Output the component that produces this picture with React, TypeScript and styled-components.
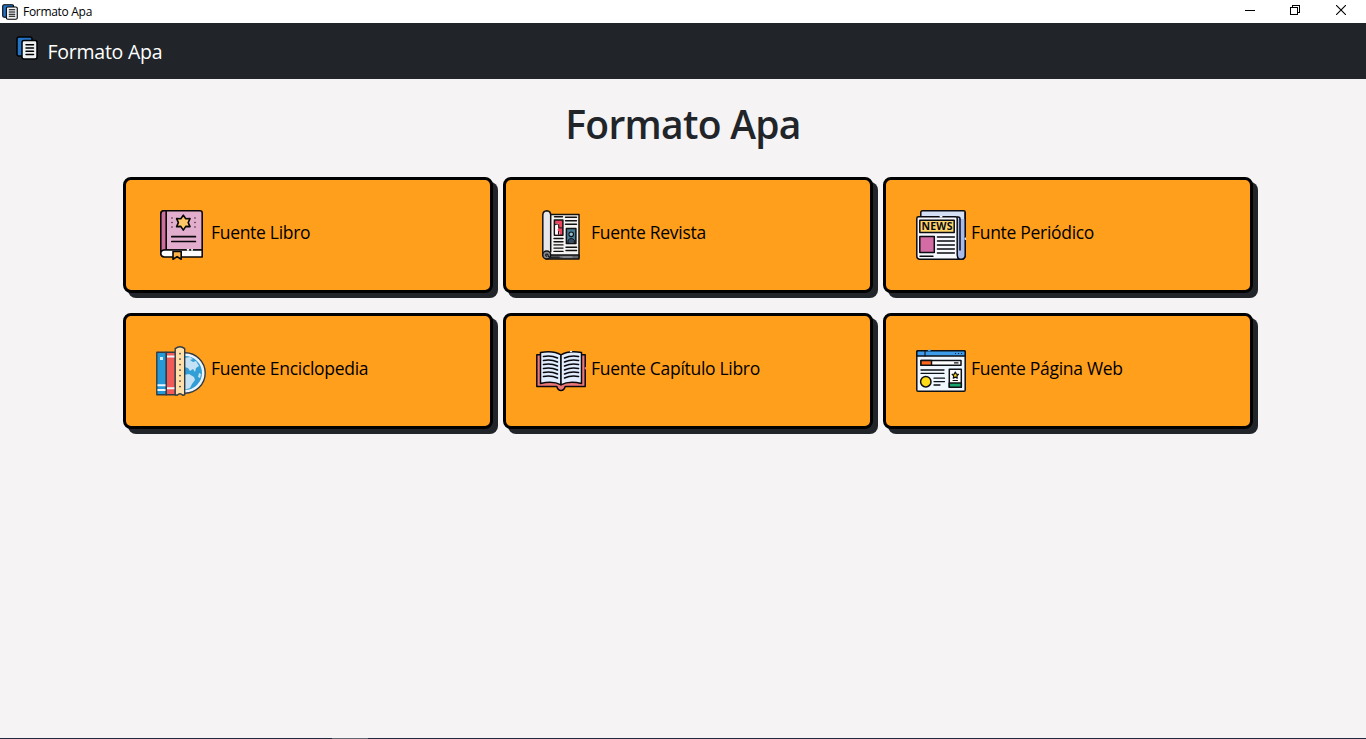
import React from "react";
import styled, { createGlobalStyle } from "styled-components";

const GlobalStyle = createGlobalStyle`
  *, *::before, *::after { box-sizing: border-box; }
  body {
    margin: 0;
    background: #f5f3f4;
    color: #212529;
    font-family: "Segoe UI", "Open Sans", "Noto Sans", sans-serif;
    overflow: hidden;
  }
`;

const Window = styled.div`
  display: flex;
  flex-direction: column;
  height: 739px;
`;

const TitleBar = styled.div`
  display: flex;
  align-items: center;
  height: 23px;
  padding-left: 2px;
  background: #fff;
  color: #000;
`;

const WindowTitle = styled.span`
  flex: 1;
  margin-left: 5px;
  font-size: 12px;
  line-height: 22px;
  letter-spacing: -0.3px;
`;

const WindowButton = styled.div`
  display: flex;
  align-items: center;
  justify-content: center;
  width: 46px;
  height: 20px;
  margin-bottom: 3px;

  &:last-child { margin-right: 2px; }
`;

const Navbar = styled.nav`
  display: flex;
  height: 56px;
  padding: 13px 16px;
  background: #212529;
`;

const Brand = styled.span`
  margin-left: 9.5px;
  color: #fff;
  font-size: 19.5px;
  line-height: 32px;
  letter-spacing: -0.25px;
`;

const Main = styled.main`
  flex: 1;
  display: flex;
  flex-direction: column;
  align-items: center;
`;

const Heading = styled.h1`
  margin: 21px 0 29px;
  font-size: 39px;
  font-weight: 550;
  line-height: 48px;
  letter-spacing: -0.7px;
`;

const CardGrid = styled.div`
  display: grid;
  grid-template-columns: repeat(3, 370px);
  column-gap: 10px;
  row-gap: 20px;
  margin-left: 10px;
`;

const Card = styled.div`
  display: flex;
  align-items: center;
  height: 116px;
  padding: 30px;
  border: 3px solid #000;
  border-radius: 8px;
  background: #ff9f1c;
  box-shadow: 5px 5px 0 #212529;
  color: #000;
`;

const CardLabel = styled.span`
  margin: -6px 0 0 5px;
  font-size: 17.5px;
  line-height: 27px;
  letter-spacing: -0.3px;
  white-space: nowrap;
`;

const Taskbar = styled.div`
  display: flex;
  height: 1px;
  padding-left: 332px;
  background: #202a40;
`;

const TaskbarItem = styled.div`
  width: 36px;
  height: 1px;
  background: #626872;
`;

const Icon = styled.svg<{ $width: number; $height: number }>`
  display: block;
  flex: none;
  width: ${(p) => p.$width}px;
  height: ${(p) => p.$height}px;
`;

const DocsIcon = ({ width, height }: { width: number; height: number }) => (
  <Icon $width={width} $height={height} viewBox="0 0 22 24" preserveAspectRatio="none" fill="none" stroke="#000" strokeWidth="1.5" strokeLinejoin="round" strokeLinecap="round">
    <path d="M3 1h11q2 0 2 2v17H3q-2 0-2-2V3q0-2 2-2Z" fill="#2374c6" />
    <rect x="6" y="4.5" width="15" height="18.5" rx="2" fill="#eef0f2" />
    <path d="M10 8.8h7.5M10 12h7.5M10 15.2h7.5M10 18.4h7.5" />
  </Icon>
);

const BookIcon = () => (
  <Icon $width={50} $height={50} viewBox="0 0 50 50" fill="none" stroke="#080808" strokeWidth="1.6" strokeLinejoin="round" strokeLinecap="round">
    <path d="M4.8 44V4Q4.8.8 8 .8h36Q46.2.8 46.2 3v37H9q-4 0-4.2 4Z" fill="#e3adcd" />
    <path d="M4.8 42V4Q4.8.8 8 .8h2.2V40Q6 40 4.8 42Z" fill="#cc6f9f" />
    <path d="M46.2 40H8.4q-3.6.3-3.6 3.5T8.4 47h37.8Z" fill="#fff" />
    <path d="M17 41.5h8.2v7.7l-4.1-2.6-4.1 2.6Z" fill="#ffb347" />
    <path d="m27.3 5.2 2.5 3.6 4.2-.2-1.8 4 1.8 4-4.2-.2-2.5 3.7-2.5-3.7-4.2.2 1.8-4-1.8-4 4.2.2Z" fill="#ffc766" />
    <path d="M15.8 26.7h23.6M15.8 31.5h23.6" strokeWidth="1.7" />
    <path d="M16 8v.1M16 12.5v.1M16 17v.1M39 8v.1M39 12.5v.1M39 17v.1" strokeWidth="1.3" />
    <path d="M31.5 39.9h1M35.8 39.9h.5" stroke="#fff" />
  </Icon>
);

const MagazineIcon = () => (
  <Icon $width={50} $height={50} viewBox="0 0 50 50" fill="none" stroke="#111" strokeWidth="1.5" strokeLinejoin="round" strokeLinecap="round">
    <path d="M12 4.6h31V47H12Z" fill="#f5f3f1" />
    <path d="M10 45h33v4H10Z" fill="#62656c" />
    <path d="M6.8 45V5Q7 1 10.8.8 14.5 1 14.7 5v37" fill="#e7e6eb" />
    <circle cx="10.7" cy="45" r="4" fill="#85888e" />
    <path d="M10.7 46.2q-1.7-.8-.6-2 2-.6 2 1.2 0 1.8 4.5 1.8H26" strokeWidth="1.1" />
    <rect x="18.4" y="10" width="8.5" height="15.2" fill="#f0435f" />
    <path d="M19.1 14.5q1.5-1.5 3.3-1v4.5l-1 2 2 2v2.5h-4.3Z" fill="#fff" stroke="none" />
    <path d="M19 14.7q2.5-1.5 3.7 0v3.2h3.5M22.5 21.5v2.8" strokeWidth="1" />
    <path d="M18.5 6.7h8M29.5 7.2h11M29.5 10.7h11M29.5 14.2h11M18 28.5h9M18 31.7h9M18 34.9h9M18 38.1h9M18 41.4h9M30 37.3h10.6M30 40.5h10.6" strokeWidth="1.4" />
    <rect x="30.4" y="18.5" width="9.5" height="15" fill="#467994" />
    <path d="M32 33v-2.7q3.2-3.6 6.4 0V33" fill="#394c61" strokeWidth="1" />
    <circle cx="35.2" cy="24.3" r="2.3" fill="#8fc1d9" strokeWidth="1.1" />
    <path d="M24 47h12" stroke="#b3b4b6" strokeWidth=".8" />
  </Icon>
);

const NewspaperIcon = () => (
  <Icon $width={50} $height={50} viewBox="0 0 50 50" fill="none" stroke="#0b0b12" strokeWidth="1.5" strokeLinejoin="round" strokeLinecap="round">
    <path d="M4.8 7V2.5Q4.8.8 6.5.8H47.5q1.7 0 1.7 1.7V45q0 4.2-4 4.2H35V7Z" fill="#d5e0f5" />
    <path d="M44 9h5.2v36q0 4.2-4 4.2-3.2 0-3.2-4.2V8Z" fill="#a8baea" stroke="none" />
    <path d="M49.2 2.5V45q0 4.2-4 4.2H38M41.3 7h.7q2 0 2 2v31" />
    <path d="M2.5 6.8h37q1.7 0 1.7 1.7V45q0 2.4 2 4.2H4Q.8 49.2.8 46V8.5q0-1.7 1.7-1.7Z" fill="#f7f9fd" />
    <rect x="3.8" y="10.2" width="34.4" height="12.3" fill="#ffd56a" />
    <text x="21" y="20.3" textAnchor="middle" textLength="31" lengthAdjust="spacing" fontFamily="Open Sans, sans-serif" fontWeight="700" fontSize="10.5" fill="#0b0b12" stroke="none">NEWS</text>
    <rect x="3.8" y="26.5" width="14.5" height="16" fill="#d36ca5" />
    <path d="M21.4 27h17M21.4 31h17M21.4 35h17M21.4 39h17M21.4 43h17M4 46.2h13" strokeWidth="1.4" />
    <path d="M24.3 6.8h1.5" stroke="#f7f9fd" strokeWidth="1.6" />
    <path d="M49.4 28.2v1" stroke="#d5e0f5" strokeWidth="1.6" />
  </Icon>
);

const EncyclopediaIcon = () => (
  <Icon $width={50} $height={50} viewBox="0 0 50 50" fill="none" stroke="#303b46" strokeWidth="1.4" strokeLinejoin="round" strokeLinecap="round">
    <circle cx="29" cy="27" r="20.2" fill="#eef5fa" />
    <circle cx="29" cy="27" r="17" fill="#319fd5" stroke="none" />
    <g fill="#c4e2f3" stroke="none">
      <path d="m28 12 6-1 3 2-3 1 3 2 3-1 3 5-3 2-1 4-2-3-3 2-2-3-4-1Z" />
      <path d="m28 29 5-1 5 3 1 3-3 4-2 4-6 2Z" />
      <path d="m43 27 2 1-1 4-2-1Z" />
    </g>
    <rect x=".8" y="6.3" width="9.5" height="42.5" fill="#2499d6" />
    <rect x="10.3" y="6.3" width="9.2" height="42.5" fill="#f05b57" />
    <path d="M1.5 39.2h8M1.5 44h8M11 10.4h8M11 42.2h8" stroke="#eef7fd" strokeWidth="2" strokeLinecap="butt" />
    <rect x="4" y="11" width="3" height="3" fill="#d7edf8" stroke="none" />
    <path d="M19.2 48.8V2.6Q24-1 28.7 2.6v46.2l-2 .5q-2.7-3-5.5 0Z" fill="#ffdfaa" />
    <path d="M24 7.5v.1M24 13v.1M24 18.5v.1M24 24v.1M24 29.5v.1M24 35v.1M24 40.5v.1" strokeWidth="1.7" />
  </Icon>
);

const OpenBookIcon = () => (
  <Icon $width={50} $height={50} viewBox="0 0 50 50" fill="none" stroke="#09090d" strokeWidth="1.5" strokeLinejoin="round" strokeLinecap="round">
    <path d="M4.5 8.8H.8v31.7h20q1.2 4 4.2 4t4.2-4h20V8.8h-3.7Z" fill="#eb7777" />
    <path d="M4.5 6.5Q17 4 25 8.8v30Q17 34.5 4.5 37.5Z" fill="#e1edff" />
    <path d="M45.5 6.5Q33 4 25 8.8v30q8-4.3 20.5-1.3Z" fill="#e1edff" />
    {[10.5, 14.5, 18.5, 22.5, 26.5, 30.5].map((y) => (
      <path key={y} d={`M7.5 ${y}q7.5-1.5 14 1.5M42.5 ${y}q-7.5-1.5-14 1.5`} strokeWidth="1.6" />
    ))}
    <path d="M49.4 21.8v.8" stroke="#eb7777" strokeWidth="1.6" />
    <path d="M34.6 5.5h.8" stroke="#e1edff" strokeWidth="1.6" />
  </Icon>
);

const WebPageIcon = () => (
  <Icon $width={50} $height={50} viewBox="0 0 50 50" fill="none" stroke="#0d1015" strokeWidth="1.5" strokeLinejoin="round" strokeLinecap="round">
    <rect x=".8" y="4.8" width="48.4" height="40.5" rx="1.3" fill="#f1f7ff" />
    <path d="M.8 10V6q0-1.2 1.2-1.2h46q1.2 0 1.2 1.2v4Z" fill="#3d9cec" />
    <path d="M9 4.8V10" strokeWidth="1.1" />
    <path d="M39.5 7.5h.1M42.5 7.5h.1M45.5 7.5h.1" strokeWidth="1.1" />
    <rect x="5" y="14.6" width="40" height="4.6" fill="#fff" />
    <rect x="5" y="14.6" width="10.5" height="4.6" fill="#ff681c" />
    <path d="M38.5 16.9h3.5M5 24h23M5 27.3h23M18 32.2h10.5M18 35.6h10.5M18 39h6" strokeWidth="1.3" />
    <circle cx="9.8" cy="35.7" r="5.2" fill="#ffda16" />
    <rect x="33.3" y="23.3" width="12" height="18" fill="#fff" />
    <rect x="33.3" y="37" width="12" height="4.3" fill="#16a56d" />
    <path d="m39.3 26 1 2.1 2.2.3-1.6 1.5.4 2.3-2-1.1-2 1.1.4-2.3-1.6-1.5 2.2-.3Z" fill="#ffda16" strokeWidth="1.2" />
    <path d="M37 34.5h4.5" strokeWidth="1" />
    <path d="M12.5 4.6h1.5" stroke="#3d9cec" />
  </Icon>
);

const sources = [
  { label: "Fuente Libro", icon: <BookIcon /> },
  { label: "Fuente Revista", icon: <MagazineIcon /> },
  { label: "Funte Periódico", icon: <NewspaperIcon /> },
  { label: "Fuente Enciclopedia", icon: <EncyclopediaIcon /> },
  { label: "Fuente Capítulo Libro", icon: <OpenBookIcon /> },
  { label: "Fuente Página Web", icon: <WebPageIcon /> },
];

export default function App() {
  return (
    <Window>
      <GlobalStyle />
      <TitleBar>
        <DocsIcon width={16} height={16} />
        <WindowTitle>Formato Apa</WindowTitle>
        <WindowButton>
          <svg width="12" height="10" shapeRendering="crispEdges"><path d="M2 5.5h10" stroke="#000" /></svg>
        </WindowButton>
        <WindowButton>
          <svg width="10" height="10" fill="none" stroke="#000" shapeRendering="crispEdges"><path d="M.5 2.5h7v7h-7ZM2.5 2V.5h7v7H8" /></svg>
        </WindowButton>
        <WindowButton>
          <svg width="10" height="10"><path d="m0 0 10 10M10 0 0 10" stroke="#000" strokeWidth="1.1" /></svg>
        </WindowButton>
      </TitleBar>
      <Navbar>
        <DocsIcon width={22} height={24} />
        <Brand>Formato Apa</Brand>
      </Navbar>
      <Main>
        <Heading>Formato Apa</Heading>
        <CardGrid>
          {sources.map((s) => (
            <Card key={s.label}>
              {s.icon}
              <CardLabel>{s.label}</CardLabel>
            </Card>
          ))}
        </CardGrid>
      </Main>
      <Taskbar>
        <TaskbarItem />
      </Taskbar>
    </Window>
  );
}
